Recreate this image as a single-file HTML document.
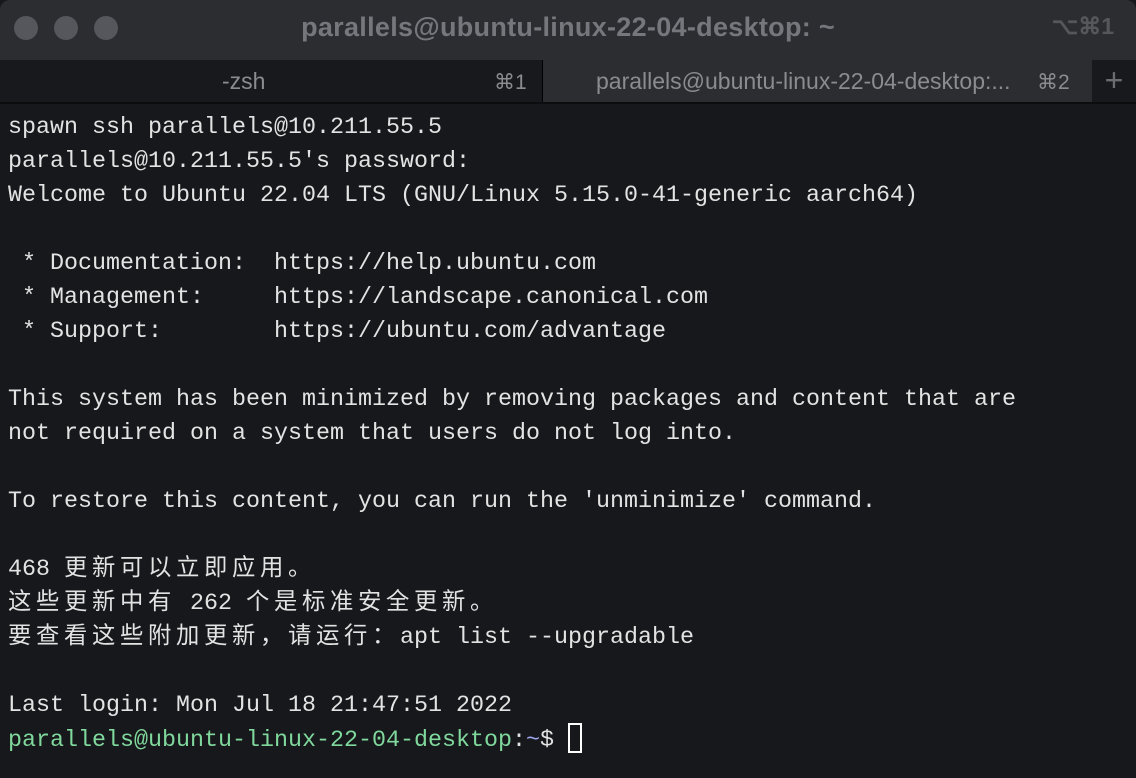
<!DOCTYPE html>
<html><head><meta charset="utf-8"><style>
*{margin:0;padding:0;box-sizing:border-box}
body{width:1136px;height:778px;background:#16181c;overflow:hidden;position:relative;font-family:"Liberation Sans",sans-serif}
.title{position:absolute;left:0;top:0;width:1136px;height:58px;background:#2b2d31;border-radius:10px 10px 0 0}
.dot{position:absolute;top:16px;width:24px;height:24px;border-radius:50%;background:#55575c}
.ttext{position:absolute;left:0;width:1136px;top:12px;text-align:center;color:#75777c;font-weight:bold;font-size:27px;letter-spacing:0.3px}
.kbd{position:absolute;right:22px;top:13px;color:#55575b;font-weight:bold;font-size:23px}
.tabs{position:absolute;left:0;top:58px;width:1136px;height:44px;background:#2b2d31}
.tab1{position:absolute;left:0;top:2px;width:543px;height:42px;background:#18191c;border-right:1px solid #000}
.plus{position:absolute;left:1092px;top:2px;width:44px;height:42px;background:#18191c;color:#6a6c70;font-size:32px;text-align:center;line-height:40px;font-weight:200}
.tl{position:absolute;top:8px;color:#8a8c90;font-size:23px}
.term{position:absolute;left:8px;top:111px;font-family:"Liberation Mono","Noto Sans CJK SC",monospace;font-size:23.33px;line-height:34px;color:#e3e3e3;white-space:pre}
.c{letter-spacing:4.67px}
.g{color:#80d89c}.b{color:#9ea6f0}
.cur{display:inline-block;width:14px;height:30px;border:2px solid #fff;vertical-align:-7px}
</style></head><body>
<div class="title">
<div class="dot" style="left:14px"></div><div class="dot" style="left:54px"></div><div class="dot" style="left:94px"></div>
<div class="ttext">parallels@ubuntu-linux-22-04-desktop: ~</div>
<div class="kbd">⌥⌘1</div>
</div>
<div class="tabs">
<div class="tab1"><span class="tl" style="left:222px">-zsh</span><span class="tl" style="left:494px;font-size:21px;top:10px">⌘1</span></div>
<span class="tl" style="left:596px;top:10px">parallels@ubuntu-linux-22-04-desktop:...</span>
<span class="tl" style="left:1037px;top:12px;font-size:21px">⌘2</span>
<div class="plus">+</div>
</div>
<div style="position:absolute;left:0;top:102px;width:1136px;height:2px;background:#0c0d0f"></div>
<div class="term">spawn ssh parallels@10.211.55.5
parallels@10.211.55.5's password:
Welcome to Ubuntu 22.04 LTS (GNU/Linux 5.15.0-41-generic aarch64)

 * Documentation:  https://help.ubuntu.com
 * Management:     https://landscape.canonical.com
 * Support:        https://ubuntu.com/advantage

This system has been minimized by removing packages and content that are
not required on a system that users do not log into.

To restore this content, you can run the 'unminimize' command.

468 <span class="c">更新可以立即应用。</span>
<span class="c">这些更新中有</span> 262 <span class="c">个是标准安全更新。</span>
<span class="c">要查看这些附加更新，请运行：</span>apt list --upgradable

Last login: Mon Jul 18 21:47:51 2022
<span class="g">parallels@ubuntu-linux-22-04-desktop</span>:<span class="b">~</span>$ <span class="cur"></span></div>
</body></html>
